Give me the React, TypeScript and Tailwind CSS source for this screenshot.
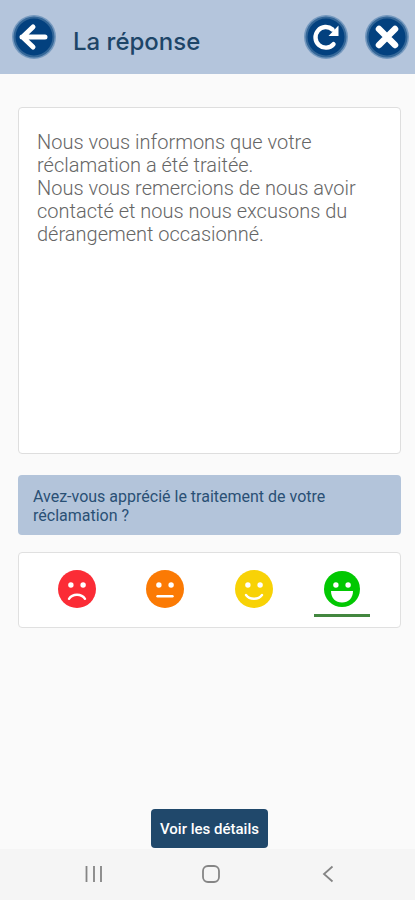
import { useState } from "react";
import type { ReactNode } from "react";

const message = [
  "Nous vous informons que votre réclamation a été traitée.",
  "Nous vous remercions de nous avoir contacté et nous nous excusons du dérangement occasionné.",
];

const ratings = [
  { id: "bad", label: "Pas satisfait", color: "text-[#fb2c36]" },
  { id: "neutral", label: "Neutre", color: "text-[#fb7a04]" },
  { id: "good", label: "Satisfait", color: "text-[#f8d206]" },
  { id: "great", label: "Très satisfait", color: "text-[#02c802]" },
];

const RoundButton = ({
  label,
  children,
}: {
  label: string;
  children: ReactNode;
}) => (
  <button
    type="button"
    aria-label={label}
    className="size-11 shrink-0 rounded-full cursor-pointer"
  >
    <svg viewBox="0 0 44 44" className="size-11" fill="none" stroke="#fff">
      <circle cx="22" cy="22" r="22" fill="#7599bf" stroke="none" />
      <circle cx="22" cy="22" r="20.5" fill="#346798" stroke="none" />
      <circle cx="22" cy="22" r="18.5" fill="#03417f" stroke="none" />
      {children}
    </svg>
  </button>
);

const Face = ({ id }: { id: string }) => (
  <svg viewBox="0 0 38 38" className="size-[38px]" fill="none">
    <circle cx="19" cy="19" r={id === "great" ? 18 : 19} fill="currentColor" />
    <circle cx="12.9" cy="15" r="2.7" fill="#fff" />
    <circle cx="25.1" cy="15" r="2.7" fill="#fff" />
    <g stroke="#fff" strokeWidth="2.4" strokeLinecap="round">
      {id === "bad" && <path d="M11 28.8C14.5 23.4 23.5 23.4 27 28.8" />}
      {id === "neutral" && <path d="M11.5 26.2H26.5" />}
      {id === "good" && <path d="M11 25C14.5 30 23.5 30 27 25" />}
    </g>
    {id === "great" && (
      <path d="M8 21H30C30 28 25.5 32.5 19 32.5S8 28 8 21Z" fill="#fff" />
    )}
  </svg>
);

const Header = () => (
  <header className="flex items-center h-[74px] pl-3 pr-1.5 bg-[#b4c5dc]">
    <RoundButton label="Retour">
      <path
        d="M33 22H10M21 12L10.5 22L21 32"
        strokeWidth="5"
        strokeLinejoin="round"
        strokeLinecap="round"
      />
    </RoundButton>
    <h1 className="flex-1 pl-[17px] pt-2.5 text-2xl font-medium text-[#1d4568] font-[Inter,sans-serif]">
      La réponse
    </h1>
    <div className="flex gap-[17px]">
      <RoundButton label="Actualiser">
        <path
          d="M29.5 29.2A10.3 10.3 0 1 1 28.5 14.5"
          strokeWidth="4.4"
          strokeLinecap="round"
        />
        <path d="M34.5 10.5V21H24.5Z" fill="#fff" stroke="none" />
      </RoundButton>
      <RoundButton label="Fermer">
        <path d="M14 14L30 30M30 14L14 30" strokeWidth="6.5" strokeLinecap="round" />
      </RoundButton>
    </div>
  </header>
);

const NavBar = () => (
  <nav className="grid grid-cols-3 h-[51px] pl-[35px] pr-7 pb-0.5 bg-[#f5f5f5] text-[#858585]">
    <button type="button" aria-label="Applications récentes" className="flex items-center justify-center">
      <svg viewBox="0 0 18 18" className="size-[18px]" stroke="currentColor" strokeWidth="1.8">
        <path d="M1.5 1V17M9 1V17M16 1V17" />
      </svg>
    </button>
    <button type="button" aria-label="Accueil" className="flex items-center justify-center">
      <svg viewBox="0 0 18 18" className="size-[18px]" fill="none" stroke="currentColor" strokeWidth="1.8">
        <rect x="1" y="1" width="16" height="16" rx="5" />
      </svg>
    </button>
    <button type="button" aria-label="Précédent" className="flex items-center justify-center">
      <svg viewBox="0 0 18 18" className="size-[18px]" fill="none" stroke="currentColor" strokeWidth="1.8">
        <path d="M13.5 1.5L5 9L13.5 16.5" />
      </svg>
    </button>
  </nav>
);

const App = () => {
  const [rating, setRating] = useState("great");

  return (
    <div className="flex flex-col min-h-screen bg-[#fafafa] font-[Roboto,sans-serif]">
      <Header />

      <main className="flex flex-col flex-1 pl-[18px] pr-3.5 pt-[33px]">
        <section className="min-h-[347px] px-[18px] pt-[23px] pb-4 rounded-sm border border-[#dedede] bg-white text-xl leading-[23px] font-light text-[#666666]">
          {message.map((line) => (
            <p key={line}>{line}</p>
          ))}
        </section>

        <h2
          id="question"
          className="mt-[21px] pl-[15px] pr-12 pt-3 pb-2.5 rounded-sm bg-[#b3c4da] text-base leading-[19px] text-[#2a5075]"
        >
          Avez-vous apprécié le traitement de votre réclamation ?
        </h2>

        <div
          role="radiogroup"
          aria-labelledby="question"
          className="grid grid-cols-4 mt-[17px] px-3.5 rounded-sm border border-[#e0e0e0] bg-white"
        >
          {ratings.map(({ id, label, color }) => (
            <label
              key={id}
              className={`relative flex flex-col items-center pt-[17px] pb-2.5 cursor-pointer ${color}`}
            >
              <input
                type="radio"
                name="rating"
                value={id}
                aria-label={label}
                checked={rating === id}
                onChange={() => setRating(id)}
                className="sr-only"
              />
              <Face id={id} />
              <span
                className={`mt-1.5 h-[3px] w-14 ${
                  rating === id ? "bg-[#43873f]" : "bg-transparent"
                }`}
              />
            </label>
          ))}
        </div>

        <button
          type="button"
          className="mt-auto mb-px self-center h-[39px] px-[9px] pt-0.5 rounded-sm bg-[#20486b] text-[15px] font-medium text-white cursor-pointer"
        >
          Voir les détails
        </button>
      </main>

      <NavBar />
    </div>
  );
};

export default App;
